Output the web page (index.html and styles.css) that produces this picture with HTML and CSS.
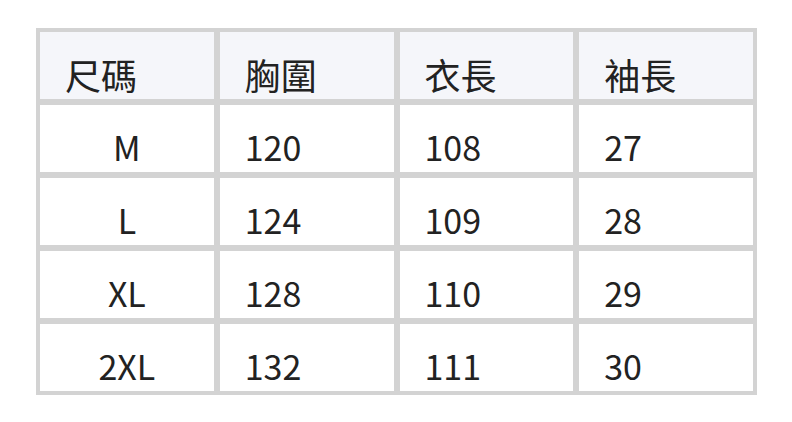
FILE: index.html
```html
<!DOCTYPE html>
<html lang="zh-Hant">
<head>
<meta charset="utf-8">
<link rel="stylesheet" href="styles.css">
</head>
<body>
<div class="size-table">
  <div class="cell head">尺碼</div>
  <div class="cell head">胸圍</div>
  <div class="cell head">衣長</div>
  <div class="cell head">袖長</div>

  <div class="cell size">M</div>
  <div class="cell">120</div>
  <div class="cell">108</div>
  <div class="cell">27</div>

  <div class="cell size">L</div>
  <div class="cell">124</div>
  <div class="cell">109</div>
  <div class="cell">28</div>

  <div class="cell size">XL</div>
  <div class="cell">128</div>
  <div class="cell">110</div>
  <div class="cell">29</div>

  <div class="cell size">2XL</div>
  <div class="cell">132</div>
  <div class="cell">111</div>
  <div class="cell">30</div>
</div>
</body>
</html>
```
FILE: styles.css
```css
html, body {
  margin: 0;
  background: #ffffff;
}
body {
  padding: 28px 0 0 36px;
  font-family: "Noto Sans CJK TC", "Noto Sans", sans-serif;
  color: #222222;
}
.size-table {
  width: 721px;
  box-sizing: border-box;
  display: grid;
  grid-template-columns: repeat(4, 1fr);
  grid-auto-rows: 67px;
  gap: 6px;
  padding: 4px;
  background: #d3d3d3;
}
.cell {
  background: #ffffff;
  display: flex;
  align-items: flex-end;
  padding: 0 0 8px 25px;
  font-size: 34px;
  line-height: 34px;
}
.cell.head {
  background: #f5f6fa;
  font-size: 36px;
  line-height: 36px;
  padding-bottom: 7px;
}
.cell.size {
  justify-content: center;
  padding-left: 0;
}
```
